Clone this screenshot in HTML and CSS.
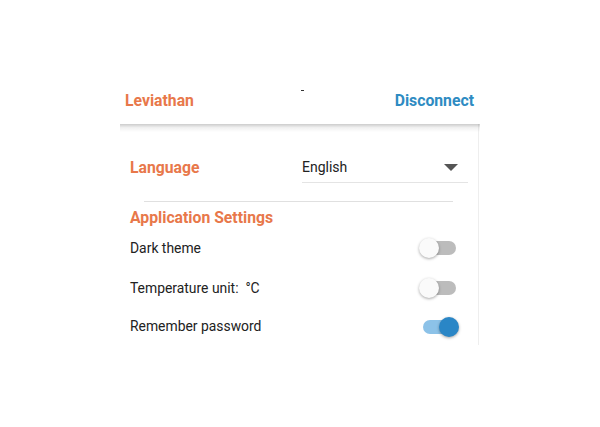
FILE: index.html
```html
<!DOCTYPE html>
<html>
<head>
<meta charset="utf-8">
<link rel="stylesheet" href="styles.css">
</head>
<body>
<div class="app">
  <header class="topbar">
    <span class="brand">Leviathan</span>
    <span class="mark"></span>
    <span class="disconnect">Disconnect</span>
  </header>
  <main class="panel">
    <div class="lang-row">
      <span class="section-title">Language</span>
      <div class="select">
        <span>English</span>
        <span class="caret"></span>
      </div>
    </div>
    <div class="divider"></div>
    <div class="section-title settings-title">Application Settings</div>
    <div class="row">
      <span>Dark theme</span>
      <span class="toggle"><span class="thumb"></span></span>
    </div>
    <div class="row">
      <span>Temperature unit:&nbsp; °C</span>
      <span class="toggle"><span class="thumb"></span></span>
    </div>
    <div class="row last">
      <span>Remember password</span>
      <span class="toggle on"><span class="thumb"></span></span>
    </div>
  </main>
</div>
</body>
</html>
```
FILE: styles.css
```css
html, body {
  margin: 0;
  padding: 0;
  background: #fff;
  font-family: Roboto, "Liberation Sans", sans-serif;
}
.app {
  width: 360px;
  margin-left: 120px;
  padding-top: 76px;
}
.topbar {
  height: 48px;
  display: flex;
  align-items: center;
  justify-content: space-between;
  padding: 0 6px 0 5px;
  font-weight: 700;
  font-size: 15.75px;
  position: relative;
  z-index: 2;
  background: #fff;
}
.topbar::after {
  content: "";
  position: absolute;
  left: 0;
  right: 0;
  top: 100%;
  height: 8px;
  background: linear-gradient(to bottom, rgba(0,0,0,0.2), rgba(0,0,0,0.06) 45%, rgba(0,0,0,0));
}
.brand { color: #e8784a; }
.disconnect { color: #2e8bc2; }
.mark {
  position: absolute;
  left: 181px;
  top: 14px;
  width: 3px;
  height: 1px;
  background: #333;
}
.panel {
  width: 358px;
  border-right: 1px solid #eeeeee;
}
.section-title {
  color: #e8784a;
  font-weight: 700;
  font-size: 15.75px;
}
.lang-row {
  display: flex;
  align-items: center;
  padding: 27px 10px 0 10px;
}
.lang-row .section-title { width: 172px; }
.select {
  flex: 0 0 166px;
  height: 32px;
  box-sizing: border-box;
  border-bottom: 1px solid #e4e4e4;
  display: flex;
  align-items: center;
  justify-content: space-between;
  font-size: 14px;
  color: #222;
  padding-right: 10px;
  padding-top: 1px;
}
.caret {
  width: 0;
  height: 0;
  border-left: 7px solid transparent;
  border-right: 7px solid transparent;
  border-top: 7px solid #555;
}
.divider {
  height: 1px;
  background: #e0e0e0;
  margin: 18px 25px 0 24px;
}
.settings-title {
  padding: 6px 10px 0;
  line-height: 20px;
}
.row {
  height: 40px;
  display: flex;
  align-items: center;
  justify-content: space-between;
  padding: 0 22px 0 10px;
  font-size: 13.9px;
  color: #222;
}
.row.last { height: 37px; align-items: flex-start; padding-top: 10px; box-sizing: border-box; }
.toggle {
  position: relative;
  width: 33px;
  height: 14px;
  border-radius: 7px;
  background: #bcbcbc;
}
.row.last .toggle { margin-top: 2px; }
.toggle .thumb {
  position: absolute;
  top: -3px;
  left: -4px;
  width: 20px;
  height: 20px;
  border-radius: 50%;
  background: #fafafa;
  box-shadow: 0 1px 3px rgba(0,0,0,0.35);
}
.toggle.on { background: #8cc2e8; }
.toggle.on .thumb {
  left: auto;
  right: -3px;
  background: #2a86c6;
}
```
